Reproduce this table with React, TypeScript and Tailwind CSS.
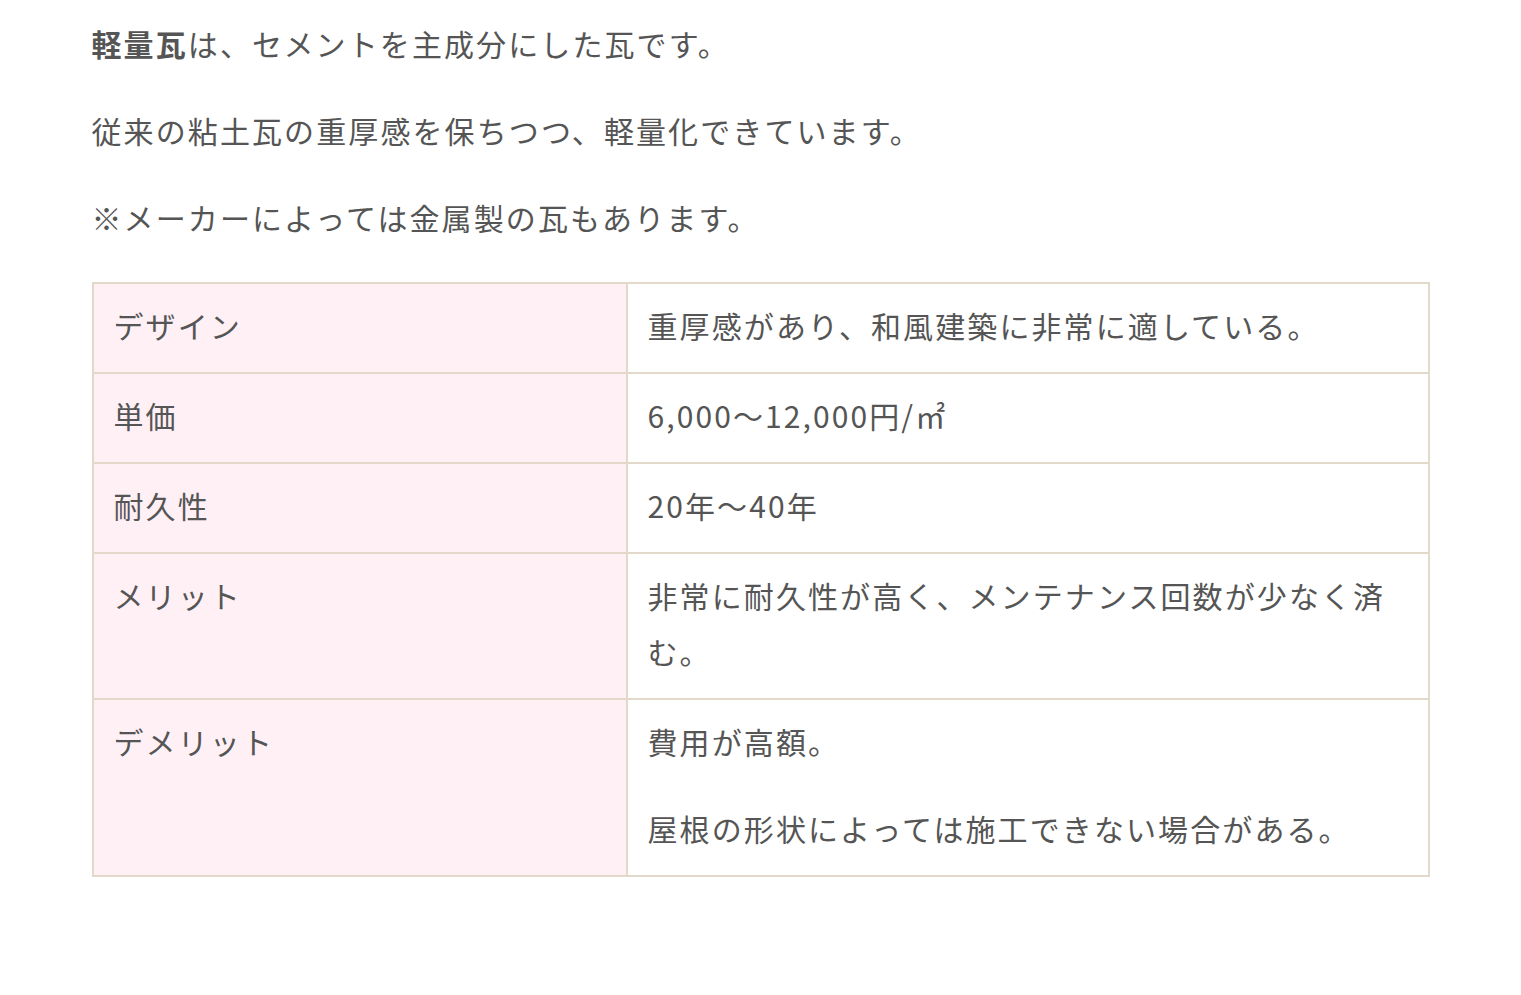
import React from 'react';

const rows: { label: string; values: string[] }[] = [
    { label: 'デザイン', values: ['重厚感があり、和風建築に非常に適している。'] },
    { label: '単価', values: ['6,000〜12,000円/㎡'] },
    { label: '耐久性', values: ['20年〜40年'] },
    { label: 'メリット', values: ['非常に耐久性が高く、メンテナンス回数が少なく済む。'] },
    { label: 'デメリット', values: ['費用が高額。', '屋根の形状によっては施工できない場合がある。'] },
];

export default function App() {
    return (
        <div
            className="min-h-[995px] bg-white text-[#555555]"
            style={{ fontFamily: '"Noto Sans CJK JP", "Noto Sans", sans-serif' }}
        >
            <div className="mx-auto w-[1338px] pt-[15px] text-[30px] leading-[56px] tracking-[0.07em]">
                <p className="mb-[31px]">
                    <strong className="font-bold">軽量瓦</strong>は、セメントを主成分にした瓦です。
                </p>
                <p className="mb-[31px]">従来の粘土瓦の重厚感を保ちつつ、軽量化できています。</p>
                <p className="mb-[37px]">※メーカーによっては金属製の瓦もあります。</p>

                <table className="w-full border-collapse border-2 border-[#e3d9ca]">
                    <tbody>
                        {rows.map((row) => (
                            <tr key={row.label}>
                                <th className="w-[534px] border-2 border-[#e3d9ca] bg-[#fff0f6] px-[20px] pt-[13px] pb-[19px] text-left align-top font-normal">
                                    {row.label}
                                </th>
                                <td className="border-2 border-[#e3d9ca] px-[20px] pt-[13px] pb-[19px] align-top">
                                    {row.values.map((v, i) => (
                                        <p key={i} className={i > 0 ? 'mt-[31px]' : ''}>
                                            {v}
                                        </p>
                                    ))}
                                </td>
                            </tr>
                        ))}
                    </tbody>
                </table>
            </div>
        </div>
    );
}
